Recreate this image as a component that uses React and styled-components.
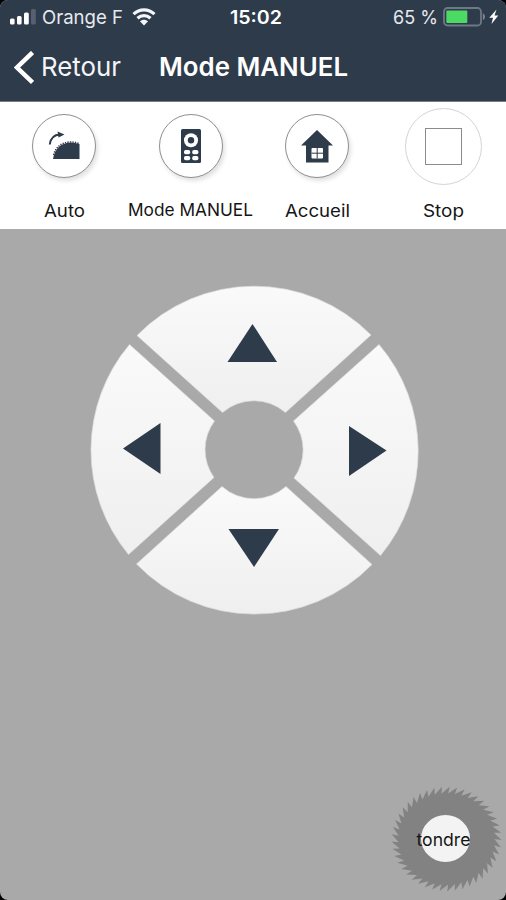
import styled, { createGlobalStyle } from 'styled-components';

const NAVY = '#2e3b4b';

const GlobalStyle = createGlobalStyle`
  * {
    box-sizing: border-box;
  }

  body {
    margin: 0;
    background: #000;
    font-family: Inter, 'Liberation Sans', sans-serif;
  }
`;

const Screen = styled.div`
  display: flex;
  flex-direction: column;
  width: 506px;
  height: 900px;
  overflow: hidden;
  background: #a9a9a9;
  border-radius: 8px;
`;

const Header = styled.header`
  height: 102px;
  background: ${NAVY};
  border-bottom: 1px solid #777d88;
  color: #fff;
`;

const StatusBar = styled.div`
  display: grid;
  grid-template-columns: 1fr auto 1fr;
  align-items: center;
  height: 34px;
  padding: 0 7px 0 10px;
`;

const StatusGroup = styled.div`
  display: flex;
  align-items: center;
  justify-content: ${(props) => props.$align || 'flex-start'};
  gap: ${(props) => props.$gap || 0}px;
`;

const StatusText = styled.svg`
  display: block;
  font-size: 19px;
  font-weight: ${(props) => props.$weight || 400};
  fill: ${(props) => (props.$weight ? '#fff' : '#e6e9ed')};
`;

const NavBar = styled.div`
  display: flex;
  align-items: center;
  height: 67px;
  padding-left: 14px;
`;

const BackButton = styled.button`
  display: flex;
  align-items: center;
  gap: 7px;
  width: 145px;
  padding: 0;
  border: none;
  background: none;
  color: #f4f5f7;
  font-family: inherit;
`;

const Fitted = styled.svg`
  display: block;
  overflow: visible;
  font-size: ${(props) => props.$size}px;
  font-weight: ${(props) => props.$weight || 400};
  fill: currentColor;
`;

const Toolbar = styled.nav`
  display: grid;
  grid-template-columns: repeat(4, 126.5px);
  height: 127px;
  padding-left: 1px;
  background: #fff;
`;

const ToolItem = styled.button`
  display: flex;
  flex-direction: column;
  align-items: center;
  padding: 5px 0 0;
  border: none;
  background: none;
  color: #151515;
  font-family: inherit;
`;

const IconSlot = styled.span`
  display: flex;
  align-items: center;
  justify-content: center;
  height: 78px;
`;

const IconCircle = styled.span`
  display: flex;
  align-items: center;
  justify-content: center;
  width: ${(props) => (props.$large ? 77 : 64)}px;
  height: ${(props) => (props.$large ? 77 : 64)}px;
  border: 1px solid ${(props) => (props.$large ? '#d4d4d4' : '#8f8f8f')};
  border-radius: 50%;
  background: #fff;
  box-shadow: ${(props) => (props.$large ? 'none' : '2px 3px 4px rgba(0, 0, 0, 0.12)')};
`;

const StopSquare = styled.span`
  width: 37px;
  height: 37px;
  border: 1px solid #8b8b8b;
`;

const ToolLabel = styled.span`
  display: flex;
  margin-top: ${(props) => props.$top}px;
`;

const Main = styled.main`
  flex: 1;
  display: flex;
  flex-direction: column;
  justify-content: space-between;
  padding: 56px 3px 7px 89px;
`;

const Pad = styled.svg`
  display: block;
`;

const MowButton = styled.button`
  align-self: flex-end;
  display: flex;
  padding: 0;
  border: none;
  background: none;
  font-family: inherit;
`;

// Text with a fixed advance width
const FitText = ({ children, width, size, weight, height = 30 }) => (
  <Fitted width={width} height={height} $size={size} $weight={weight}>
    <text x="0" y={height * 0.74} textLength={width} lengthAdjust="spacingAndGlyphs">
      {children}
    </text>
  </Fitted>
);

const Signal = () => (
  <svg width="26" height="16" viewBox="0 0 26 16">
    <rect x="0" y="9.5" width="4.6" height="6" rx="1.5" fill="#fff" />
    <rect x="7" y="7" width="4.6" height="8.5" rx="1.5" fill="#fff" />
    <rect x="14" y="3.5" width="4.8" height="12" rx="1.5" fill="#fff" />
    <rect x="21" y="0" width="4.8" height="15.5" rx="1.5" fill="#556070" />
  </svg>
);

const Wifi = () => (
  <svg width="24" height="18" viewBox="0 0 24 18" fill="none" stroke="#f4f5f7" strokeWidth="3.2">
    <path d="M1.5 6.2C7.5 .5 16.5 .5 22.5 6.2" />
    <path d="M5.5 10.2C9.3 6.7 14.7 6.7 18.5 10.2" />
    <path d="M12 17.5L7.9 13.2C10.3 11.1 13.7 11.1 16.1 13.2Z" fill="#f4f5f7" stroke="none" />
  </svg>
);

const Battery = () => (
  <svg width="56" height="20" viewBox="0 0 56 20">
    <rect x="1" y="1" width="37" height="17.5" rx="3.5" fill="none" stroke="#6f7885" strokeWidth="1.8" />
    <rect x="3.3" y="3.4" width="21" height="12.7" rx="1" fill="#4cd964" />
    <path d="M39.8 6.3C42.7 7.5 42.7 12 39.8 13.2Z" fill="#7c8490" />
    <path d="M53.5 2.5L46.3 10.8H50L48.5 17L55.3 8.6H51.5Z" fill="#fff" />
  </svg>
);

const AutoIcon = () => (
  <svg width="34" height="32" viewBox="0 0 34 32">
    <path d="M6 29C7.5 19 14 12.5 24 12.5Q28 12.5 32.5 14V29Z" fill={NAVY} />
    <path d="M6.5 25C9 16.5 15 12 24 12Q28 12 32 13.5" fill="none" stroke={NAVY} strokeWidth="1.5" strokeDasharray="1.3 1.2" />
    <path d="M2.8 14.5C3.5 8 7 4.8 13 4.5" fill="none" stroke={NAVY} strokeWidth="2" />
    <path d="M10.5 1.5L17.5 4.5L11.5 7.5Z" fill={NAVY} />
  </svg>
);

const RemoteIcon = () => (
  <svg width="20" height="34" viewBox="0 0 20 34">
    <rect x="0" y="0" width="20" height="34" rx="1.5" fill={NAVY} />
    <circle cx="10" cy="11.2" r="7" fill="#fff" />
    <circle cx="10" cy="11.2" r="3.2" fill={NAVY} />
    <g fill="#fff">
      <rect x="3" y="21" width="6.2" height="4.2" rx="1.7" />
      <rect x="11.2" y="21" width="6.2" height="4.2" rx="1.7" />
      <rect x="3" y="27" width="6.2" height="4.2" rx="1.7" />
      <rect x="11.2" y="27" width="6.2" height="4.2" rx="1.7" />
    </g>
  </svg>
);

const HouseIcon = () => (
  <svg width="32" height="33" viewBox="0 0 32 33">
    <path d="M16 0L32 15.5H27.5V32.5H5V15.5H0Z" fill={NAVY} />
    <rect x="10.5" y="18" width="11.5" height="10.5" rx="1" fill="#fff" />
    <path d="M16.2 18V28.5M10.5 23.2H22" stroke={NAVY} strokeWidth="1" />
  </svg>
);

const tools = [
  { label: 'Auto', width: 41, size: 17, top: 14, icon: <AutoIcon /> },
  { label: 'Mode MANUEL', width: 125, size: 17, top: 13, icon: <RemoteIcon /> },
  { label: 'Accueil', width: 65, size: 17, top: 14, icon: <HouseIcon /> },
  { label: 'Stop', width: 41, size: 17, top: 14, icon: <StopSquare />, large: true },
];

const DirectionPad = () => (
  <Pad width="332" height="332" viewBox="89 285 332 332">
    <defs>
      <linearGradient id="segment" x1="0" y1="0" x2="0" y2="1">
        <stop offset="0" stopColor="#fafafa" />
        <stop offset="1" stopColor="#efefef" />
      </linearGradient>
    </defs>
    <g fill="url(#segment)" stroke="#dcdcdc" strokeWidth="0.7">
      <path d="M137 335.5A164 164 0 0 1 371 335L285.5 412.5A48 48 0 0 0 222.5 412.5Z" />
      <path d="M379 344.5A164 164 0 0 1 380.5 555.5L294 478A48 48 0 0 0 293.5 421Z" />
      <path d="M372 564.5A164 164 0 0 1 136.5 564L222 486.5A48 48 0 0 0 286 486.5Z" />
      <path d="M128.5 554.5A164 164 0 0 1 129.5 344.5L214.5 421A48 48 0 0 0 214 477.5Z" />
    </g>
    <g fill={NAVY}>
      <path d="M252.5 324L277 362H227.5Z" />
      <path d="M386.5 450.5L349 426V476Z" />
      <path d="M254 567L228.5 529H279Z" />
      <path d="M123 448.5L160.5 423V474Z" />
    </g>
  </Pad>
);

const TEETH = 45;

// Alternates root and swept tip points around the blade
const bladePath = () => {
  const points = [];
  const at = (radius, turn) => {
    const angle = turn * Math.PI * 2;
    return `${(55.5 + radius * 1.03 * Math.cos(angle)).toFixed(2)} ${(54 + radius * 0.98 * Math.sin(angle)).toFixed(2)}`;
  };
  for (let i = 0; i < TEETH; i++) {
    points.push(at(46.5, i / TEETH), at(53.5, (i + 1.15) / TEETH));
  }
  return `M${points.join('L')}Z`;
};

const SawBlade = () => (
  <svg width="112" height="108" viewBox="0 0 112 108">
    <path d={bladePath()} fill="#828282" />
    <ellipse cx="54.5" cy="53.5" rx="24.5" ry="23.5" fill="#f3f3f3" />
    <text x="25.5" y="60.5" fontSize="17.5" textLength="54" lengthAdjust="spacingAndGlyphs" fill="#151515">
      tondre
    </text>
  </svg>
);

const App = () => {
  return (
    <>
      <GlobalStyle />
      <Screen>
        <Header>
          <StatusBar>
            <StatusGroup $gap={6}>
              <Signal />
              <StatusText width="84" height="26">
                <text x="0" y="19.5" textLength="81" lengthAdjust="spacingAndGlyphs">Orange F</text>
              </StatusText>
              <Wifi />
            </StatusGroup>
            <StatusText width="54" height="26" $weight={600}>
              <text x="2" y="19.5" textLength="52" lengthAdjust="spacingAndGlyphs">15:02</text>
            </StatusText>
            <StatusGroup $align="flex-end">
              <StatusText width="50" height="26">
                <text x="0" y="19.5" textLength="45" lengthAdjust="spacingAndGlyphs">65 %</text>
              </StatusText>
              <Battery />
            </StatusGroup>
          </StatusBar>
          <NavBar>
            <BackButton>
              <svg width="20" height="34" viewBox="0 0 20 34" fill="none" stroke="#fff" strokeWidth="4.5">
                <path d="M18.5 1.5L3 16.5L18.5 31.5" />
              </svg>
              <FitText width={80} size={26} height={32}>Retour</FitText>
            </BackButton>
            <FitText width={189} size={26} weight={600} height={32}>Mode MANUEL</FitText>
          </NavBar>
        </Header>
        <Toolbar>
          {tools.map((tool) => (
            <ToolItem key={tool.label}>
              <IconSlot>
                <IconCircle $large={tool.large}>{tool.icon}</IconCircle>
              </IconSlot>
              <ToolLabel $top={tool.top}>
                <FitText width={tool.width} size={tool.size} height={24}>{tool.label}</FitText>
              </ToolLabel>
            </ToolItem>
          ))}
        </Toolbar>
        <Main>
          <DirectionPad />
          <MowButton>
            <SawBlade />
          </MowButton>
        </Main>
      </Screen>
    </>
  );
};

export default App;
